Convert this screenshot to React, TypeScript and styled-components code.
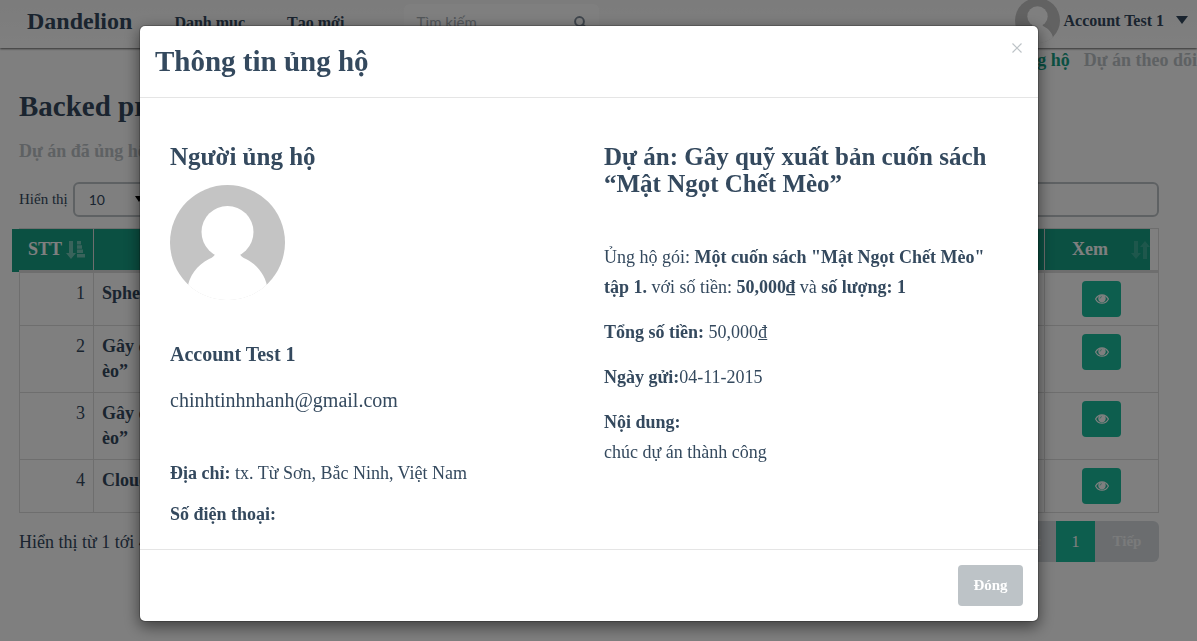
import React from "react";
import styled, { createGlobalStyle, css } from "styled-components";

const serif = '"Liberation Serif", "Times New Roman", serif';
const ink = "#34495e";
const green = "#16a085";
const lightGreen = "#1abc9c";
const silver = "#bdc3c7";
const line = "#dddddd";

const GlobalStyle = createGlobalStyle`
  *, *::before, *::after { box-sizing: border-box; }
  body {
    margin: 0;
    background: #ffffff;
    color: ${ink};
    font: 18px/25px ${serif};
    overflow: hidden;
  }
  h1, h2, h3, p, ul { margin: 0; padding: 0; }
  a { color: inherit; text-decoration: none; }
  button, input, select { font: inherit; color: inherit; }
`;

const Navbar = styled.header`
  display: flex;
  align-items: center;
  height: 48px;
  padding: 0 9px 8px 27px;
  box-shadow: 0 1px 2px rgba(0, 0, 0, 0.6);
  background: linear-gradient(#f8f8f8, #ffffff);
`;

const Brand = styled.a`
  padding-top: 2px;
  font-size: 24px;
  font-weight: bold;
  margin-right: 42px;
`;

const NavLinks = styled.nav`
  display: flex;
  gap: 42px;
  padding: 4px 30px 0 0;
  font-size: 16px;
  font-weight: bold;
`;

const SearchForm = styled.form`
  display: flex;
  align-items: center;
  width: 195px;
  height: 36px;
  margin: 4px 0 0 30px;
  padding: 0 12px;
  border-radius: 6px;
  background: #ffffff;
  color: #7f8c9a;
`;

const SearchInput = styled.input`
  flex: 1;
  min-width: 0;
  border: 0;
  padding: 0;
  background: none;
  font: 15px/20px Lato, sans-serif;
  &::placeholder { color: #a6adb4; opacity: 1; }
`;

const Account = styled.button`
  display: flex;
  align-items: center;
  gap: 4px;
  margin-left: auto;
  padding: 0;
  border: 0;
  background: none;
  font-size: 16px;
  font-weight: bold;
`;

const Caret = styled.span`
  margin-left: 8px;
  border: 6px solid transparent;
  border-top: 8px solid ${ink};
  border-bottom: 0;
`;

const Tabs = styled.nav`
  display: flex;
  justify-content: flex-end;
  gap: 14px;
  font-weight: bold;
  white-space: nowrap;
`;

const TabLink = styled.a<{ $active?: boolean }>`
  color: ${(p) => (p.$active ? green : silver)};
`;

const Content = styled.main`
  padding: 16px 38px 0 19px;
`;

const PageTitle = styled.h1`
  font-size: 29px;
  line-height: 34px;
`;

const SubTitle = styled.h2`
  margin-top: 16px;
  font-size: 18px;
  line-height: 25px;
  color: ${silver};
`;

const Controls = styled.div`
  display: flex;
  justify-content: space-between;
  margin-top: 18px;
`;

const LengthLabel = styled.label`
  display: flex;
  align-items: center;
  gap: 5px;
  font-size: 15px;
`;

const SelectBox = styled.span`
  position: relative;
  display: block;
`;

const fieldStyle = css`
  height: 35px;
  border: 2px solid ${silver};
  border-radius: 6px;
  background: #ffffff;
  font: 14px/20px Lato, sans-serif;
`;

const LengthSelect = styled.select`
  ${fieldStyle}
  appearance: none;
  width: 84px;
  padding: 0 14px;
`;

const SelectArrow = styled.span`
  position: absolute;
  right: 14px;
  top: 14px;
  border: 4px solid transparent;
  border-top: 6px solid #000000;
  border-bottom: 0;
  pointer-events: none;
`;

const FilterInput = styled.input`
  ${fieldStyle}
  width: 240px;
`;

const Table = styled.table`
  width: 100%;
  margin-top: 11px;
  border-collapse: collapse;
  border: 1px solid ${line};
  table-layout: fixed;
`;

const Th = styled.th<{ $width?: number; $edge?: "first" | "last" }>`
  width: ${(p) => (p.$width ? `${p.$width}px` : "auto")};
  height: 43px;
  padding: 0 8px;
  border: 1px solid ${line};
  border-bottom: 3px solid ${line};
  background: ${green};
  background-clip: padding-box;
  color: #ffffff;
  ${(p) =>
    p.$edge === "first" &&
    css`
      box-shadow: -8px 0 ${green};
      border-left-color: ${green};
    `}
  ${(p) =>
    p.$edge === "last" &&
    css`
      background: linear-gradient(${green}, ${green}) no-repeat left / calc(100% - 8px) 100%;
    `}
`;

const HeadInner = styled.span<{ $spread?: boolean }>`
  display: flex;
  align-items: center;
  justify-content: space-between;
  padding-left: ${(p) => (p.$spread ? "19px" : "0")};
`;

const Td = styled.td<{ $align?: "right" | "center"; $bold?: boolean }>`
  padding: 8px;
  border: 1px solid ${line};
  vertical-align: top;
  text-align: ${(p) => p.$align || "left"};
  font-weight: ${(p) => (p.$bold ? "bold" : "normal")};
`;

const ViewButton = styled.button`
  display: block;
  width: 39px;
  height: 36px;
  margin: 0 auto;
  padding: 0;
  border: 0;
  border-radius: 4px;
  background: ${lightGreen};
  color: #ffffff;
  line-height: 0;
`;

const TableFooter = styled.div`
  display: flex;
  justify-content: space-between;
  align-items: center;
  margin-top: 8px;
`;

const TableInfo = styled.p`
  padding-top: 2px;
`;

const Pager = styled.ul`
  display: flex;
  overflow: hidden;
  border-radius: 6px;
  background: #d6dbdf;
  list-style: none;
`;

const PageButton = styled.button<{ $active?: boolean }>`
  min-width: ${(p) => (p.$active ? "39px" : "64px")};
  height: 41px;
  padding: 0 15px;
  border: 0;
  background: ${(p) => (p.$active ? lightGreen : "transparent")};
  color: ${(p) => (p.$active ? "#ffffff" : "#f4f6f7")};
  font-size: ${(p) => (p.$active ? "16px" : "15px")};
  font-weight: ${(p) => (p.$active ? "normal" : "bold")};
`;

const Backdrop = styled.div`
  position: fixed;
  inset: 0;
  padding: 25px 19px 0 0;
  background: rgba(0, 0, 0, 0.5);
`;

const Dialog = styled.section`
  max-width: 900px;
  margin: 0 auto;
  border: 1px solid rgba(0, 0, 0, 0.2);
  border-radius: 6px;
  background: #ffffff;
  background-clip: padding-box;
  box-shadow: 0 5px 15px rgba(0, 0, 0, 0.5);
`;

const DialogHeader = styled.header`
  display: flex;
  justify-content: space-between;
  align-items: flex-start;
  padding: 15px;
  border-bottom: 1px solid #e5e5e5;
`;

const DialogTitle = styled.h2`
  font-size: 29px;
  line-height: 41px;
`;

const CloseButton = styled.button`
  padding: 1px 0 0;
  border: 0;
  background: none;
  color: ${silver};
  line-height: 0;
`;

const DialogBody = styled.div`
  display: grid;
  grid-template-columns: 1fr 1fr;
  padding: 45px 15px 20px;
`;

const Column = styled.div`
  padding: 0 15px;
`;

const ColumnTitle = styled.h3`
  font-size: 25px;
  line-height: 27px;
`;

const AvatarWrap = styled.div`
  margin: 15px 0 41px;
  line-height: 0;
`;

const Person = styled.p`
  font-size: 20px;
  line-height: 26px;
  margin-bottom: 20px;
`;

const Contacts = styled.div`
  display: flex;
  flex-direction: column;
  gap: 11px;
  margin-top: 45px;
  line-height: 30px;
`;

const Details = styled.div`
  display: flex;
  flex-direction: column;
  gap: 15px;
  margin-top: 45px;
  line-height: 30px;
`;

const DialogFooter = styled.footer`
  display: flex;
  justify-content: flex-end;
  padding: 15px;
  border-top: 1px solid #e5e5e5;
`;

const DismissButton = styled.button`
  min-width: 65px;
  height: 41px;
  padding: 0 14px;
  border: 0;
  border-radius: 4px;
  background: ${silver};
  color: #ffffff;
  font-size: 15px;
  font-weight: bold;
`;

function Avatar({ size, id }: { size: number; id: string }) {
  return (
    <svg width={size} height={size} viewBox="0 0 115 115" aria-hidden="true">
      <clipPath id={id}>
        <circle cx="57.5" cy="57.5" r="57.5" />
      </clipPath>
      <g clipPath={`url(#${id})`}>
        <rect width="115" height="115" fill="#c4c4c4" />
        <circle cx="57.5" cy="47" r="26" fill="#ffffff" />
        <path d="M45 69h25q1 3 6 5c12 6 20 17 22 31v12H17v-12c2-14 10-25 22-31q5-2 6-5z" fill="#ffffff" />
        <path d="M0 100h115v15H0z" fill="#ffffff" />
      </g>
    </svg>
  );
}

function SearchIcon() {
  return (
    <svg width="13" height="13" viewBox="0 0 13 13" fill="none" stroke="currentColor" strokeWidth="2" aria-hidden="true">
      <circle cx="5.5" cy="5.5" r="4.400" />
      <path d="M8.800 8.800 12 12" strokeWidth="2.600" />
    </svg>
  );
}

function EyeIcon() {
  return (
    <svg width="14" height="10" viewBox="0 0 14 10" aria-hidden="true">
      <path d="M.6 5C2 2.200 4.300.8 7 .8s5 1.400 6.400 4.200C12 7.800 9.700 9.200 7 9.200S2 7.800.6 5z" fill="none" stroke="currentColor" strokeWidth="1.200" />
      <circle cx="7" cy="4.600" r="3.700" fill="currentColor" />
      <path d="M5 4.600A2 2 0 0 1 7 2.600" fill="none" stroke={lightGreen} strokeWidth=".5" />
    </svg>
  );
}

function SortAscIcon() {
  return (
    <svg width="19" height="18" viewBox="0 0 19 18" fill="#ffffff" opacity=".4" aria-hidden="true">
      <path d="M3 0h4v12h3l-5 6-5-6h3zM11 0h4v3.500h-4zM11 4.300h5v3.500h-5zM11 8.600h6v3.500h-6zM11 13h8v3.500h-8z" />
    </svg>
  );
}

function SortIcon() {
  return (
    <svg width="19" height="18" viewBox="0 0 19 18" fill="#ffffff" opacity=".16" aria-hidden="true">
      <path d="M3 0h4v12h3l-5 6-5-6h3zM12 18h4V6h3l-5-6-5 6h3z" />
    </svg>
  );
}

const rows = [
  { id: 1, name: ["Sphero BB-8"] },
  { id: 2, name: ["Gây quỹ xuất bản cuốn sách “Mật Ngọt Chết M", "èo”"] },
  { id: 3, name: ["Gây quỹ xuất bản cuốn sách “Mật Ngọt Chết M", "èo”"] },
  { id: 4, name: ["Cloud"] },
];

export default function App() {
  return (
    <>
      <GlobalStyle />
      <Navbar>
        <Brand href="#">Dandelion</Brand>
        <NavLinks>
          <a href="#">Danh mục</a>
          <a href="#">Tạo mới</a>
        </NavLinks>
        <SearchForm>
          <SearchInput placeholder="Tìm kiếm" aria-label="Tìm kiếm" />
          <SearchIcon />
        </SearchForm>
        <Account type="button">
          <Avatar size={45} id="nav-avatar" />
          Account Test 1
          <Caret />
        </Account>
      </Navbar>
      <Tabs>
        <TabLink href="#" $active>Dự án đã ủng hộ</TabLink>
        <TabLink href="#">Dự án theo dõi</TabLink>
      </Tabs>
      <Content>
        <PageTitle>Backed projects</PageTitle>
        <SubTitle>Dự án đã ủng hộ</SubTitle>
        <Controls>
          <LengthLabel>
            Hiển thị
            <SelectBox>
              <LengthSelect defaultValue="10">
                <option>10</option>
                <option>25</option>
              </LengthSelect>
              <SelectArrow />
            </SelectBox>
          </LengthLabel>
          <FilterInput aria-label="Tìm kiếm dự án" />
        </Controls>
        <Table>
          <thead>
            <tr>
              <Th $width={74} $edge="first">
                <HeadInner>STT <SortAscIcon /></HeadInner>
              </Th>
              <Th>Dự án</Th>
              <Th $width={114} $edge="last">
                <HeadInner $spread>Xem <SortIcon /></HeadInner>
              </Th>
            </tr>
          </thead>
          <tbody>
            {rows.map((row) => (
              <tr key={row.id}>
                <Td $align="right">{row.id}</Td>
                <Td $bold>
                  {row.name.map((part) => (
                    <div key={part}>{part}</div>
                  ))}
                </Td>
                <Td $align="center">
                  <ViewButton type="button" aria-label="Xem"><EyeIcon /></ViewButton>
                </Td>
              </tr>
            ))}
          </tbody>
        </Table>
        <TableFooter>
          <TableInfo>Hiển thị từ 1 tới 4 của 4 dự án</TableInfo>
          <Pager>
            <li><PageButton type="button">Trước</PageButton></li>
            <li><PageButton type="button" $active>1</PageButton></li>
            <li><PageButton type="button">Tiếp</PageButton></li>
          </Pager>
        </TableFooter>
      </Content>
      <Backdrop>
        <Dialog role="dialog" aria-labelledby="dialog-title">
          <DialogHeader>
            <DialogTitle id="dialog-title">Thông tin ủng hộ</DialogTitle>
            <CloseButton type="button" aria-label="Đóng cửa sổ">
              <svg width="12" height="12" viewBox="0 0 12 12" stroke="currentColor" strokeWidth="1.200" aria-hidden="true">
                <path d="M1.500 1.500l9 9M10.500 1.500l-9 9" />
              </svg>
            </CloseButton>
          </DialogHeader>
          <DialogBody>
            <Column>
              <ColumnTitle>Người ủng hộ</ColumnTitle>
              <AvatarWrap><Avatar size={115} id="backer-avatar" /></AvatarWrap>
              <Person><strong>Account Test 1</strong></Person>
              <Person>chinhtinhnhanh@gmail.com</Person>
              <Contacts>
                <p><strong>Địa chỉ:</strong> tx. Từ Sơn, Bắc Ninh, Việt Nam</p>
                <p><strong>Số điện thoại:</strong></p>
              </Contacts>
            </Column>
            <Column>
              <ColumnTitle>Dự án: Gây quỹ xuất bản cuốn sách “Mật Ngọt Chết Mèo”</ColumnTitle>
              <Details>
                <p>
                  Ủng hộ gói: <strong>Một cuốn sách "Mật Ngọt Chết Mèo" tập 1.</strong> với số tiền:{" "}
                  <strong>50,000₫</strong> và <strong>số lượng: 1</strong>
                </p>
                <p><strong>Tổng số tiền:</strong> 50,000₫</p>
                <p><strong>Ngày gửi:</strong>04-11-2015</p>
                <p><strong>Nội dung:</strong><br />chúc dự án thành công</p>
              </Details>
            </Column>
          </DialogBody>
          <DialogFooter>
            <DismissButton type="button">Đóng</DismissButton>
          </DialogFooter>
        </Dialog>
      </Backdrop>
    </>
  );
}
